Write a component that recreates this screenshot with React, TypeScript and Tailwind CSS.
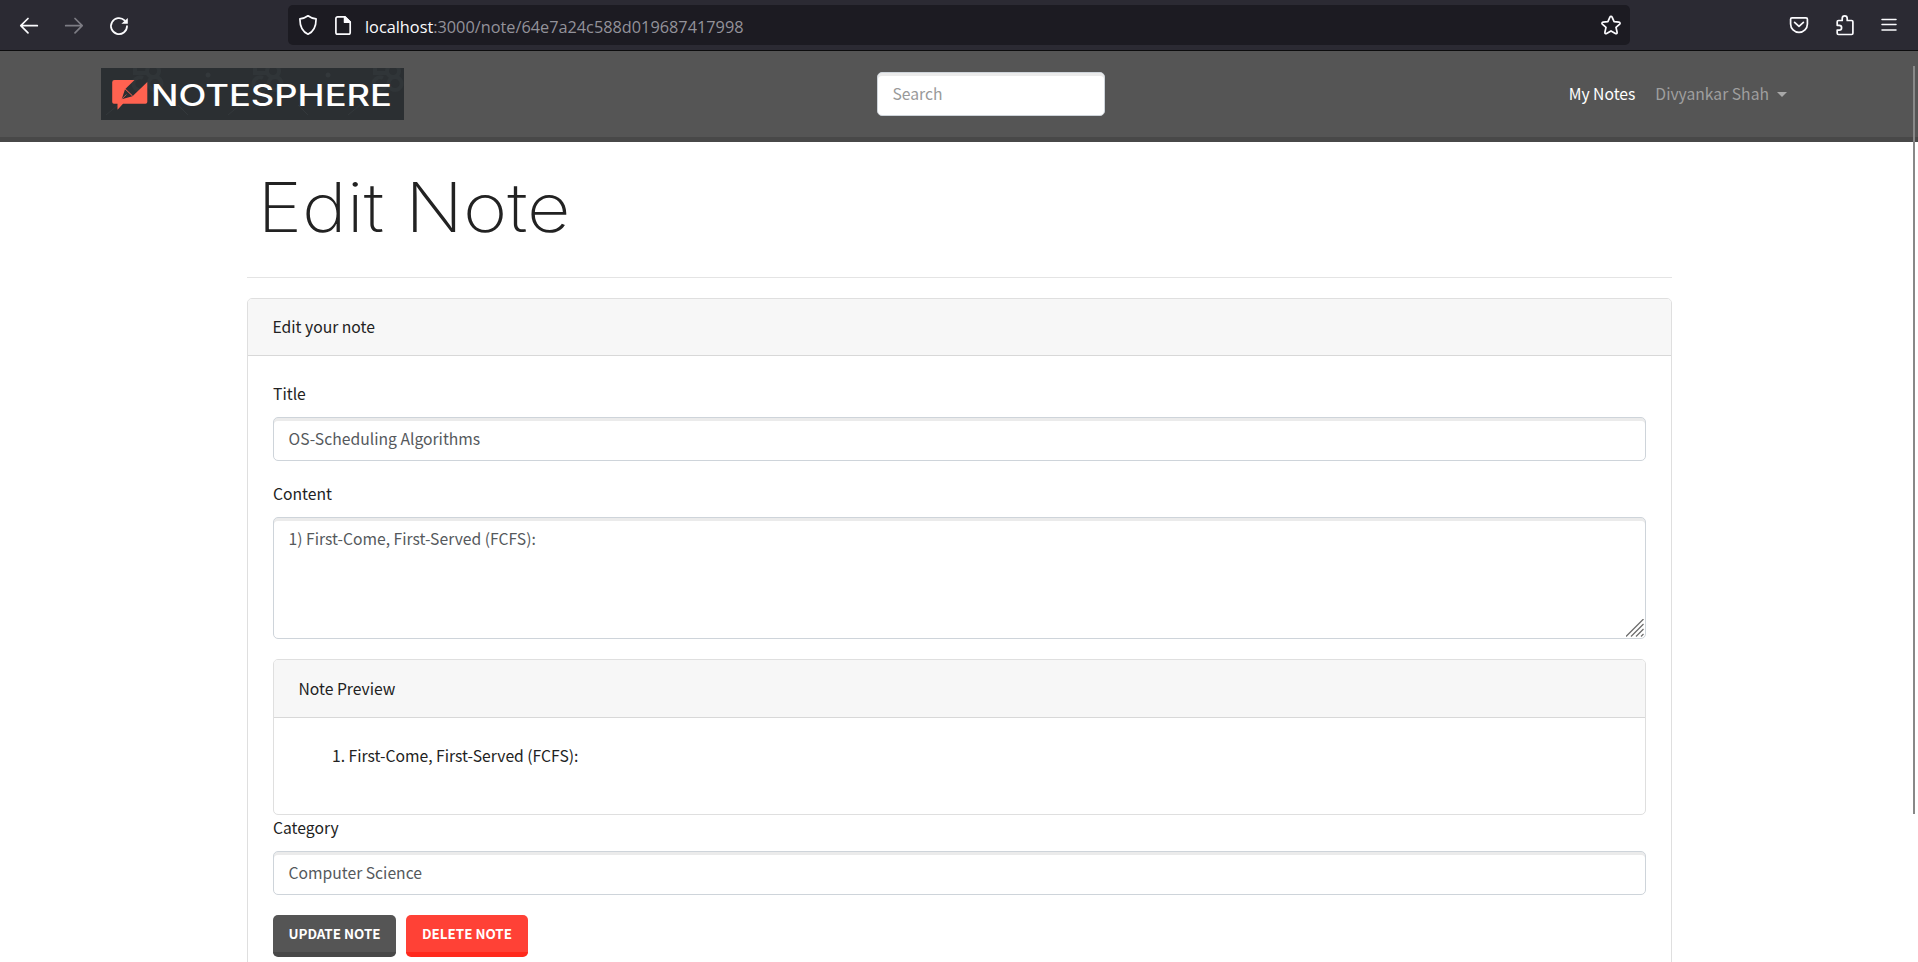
import type { ReactNode } from "react";

function Field({ children }: { children: ReactNode }) {
  return (
    <div className="flex h-11 items-center rounded-[5px] border border-[#ced4da] bg-white px-[14.5px] text-[#55595c] shadow-[inset_0_3px_0_0_#ebebeb]">
      {children}
    </div>
  );
}

function Label({ children }: { children: ReactNode }) {
  return <div className="h-9 pt-px">{children}</div>;
}

function BrowserBar() {
  return (
    <div className="flex h-[51px] shrink-0 items-start border-b border-[#0c0c0d] bg-[#2b2a33] text-[#fbfbfe]">
      <div className="flex w-[288px] items-center pt-[13px] pl-[17px]">
        <svg width="24" height="24" viewBox="0 0 24 24" fill="none" stroke="currentColor" strokeWidth="1.7" strokeLinecap="round" strokeLinejoin="round">
          <path d="M20.3 12.7H4M11 5.5l-7.2 7.2L11 19.9" />
        </svg>
        <svg className="ml-[21px] text-[#7d7c84]" width="24" height="24" viewBox="0 0 24 24" fill="none" stroke="currentColor" strokeWidth="1.7" strokeLinecap="round" strokeLinejoin="round">
          <path d="M3.7 12.7H20M13 5.5l7.2 7.2-7.2 7.2" />
        </svg>
        <svg className="ml-[21px]" width="24" height="24" viewBox="0 0 24 24" fill="none" stroke="currentColor" strokeWidth="1.8" strokeLinecap="round">
          <path d="M17.6 7.4A8 8 0 1 0 20 13.2" />
          <path d="M20.8 5v5.8h-6.4z" fill="currentColor" stroke="none" />
        </svg>
      </div>
      <div className="mt-[5px] flex h-10 w-[1342px] items-center rounded-[5px] bg-[#1c1b22] pr-[7px] pl-2">
        <svg width="24" height="24" viewBox="0 0 24 24" fill="none" stroke="currentColor" strokeWidth="1.7" strokeLinejoin="round">
          <path d="M12 2.8c-2.4 1.8-5 2.7-8.1 3.1 0 6.6 1.5 12.2 8.1 15.3 6.6-3.1 8.1-8.7 8.1-15.3C17 5.5 14.4 4.6 12 2.8z" />
        </svg>
        <svg className="ml-[11px]" width="24" height="24" viewBox="0 0 24 24" fill="none" stroke="currentColor" strokeWidth="1.7" strokeLinejoin="round">
          <path d="M6.6 3.8h7.4l5.2 5.2v10.5a1.7 1.7 0 0 1-1.7 1.7H6.6a1.7 1.7 0 0 1-1.7-1.7v-14a1.7 1.7 0 0 1 1.7-1.7z" />
          <path d="M13.6 3.8v5.4h5.6z" fill="currentColor" />
        </svg>
        <div className="ml-[10px] pt-[3px] font-['Open_Sans',sans-serif] text-[16.3px] leading-6 whitespace-nowrap">
          localhost<span className="text-[#93929a]">:3000/note/64e7a24c588d019687417998</span>
        </div>
        <svg className="ml-auto" width="24" height="24" viewBox="0 0 24 24" fill="none" stroke="currentColor" strokeWidth="1.7" strokeLinejoin="round">
          <path d="M12 3.4c.5 0 .9.3 1.1.7l2 4.6 4.9.5c1.1.1 1.4 1.2.7 1.9l-3.7 3.3 1.1 4.9c.2 1-.8 1.7-1.7 1.2L12 17.9l-4.4 2.6c-.9.5-1.9-.2-1.7-1.2L7 14.4l-3.7-3.3c-.7-.7-.4-1.8.7-1.9l4.9-.5 2-4.6c.2-.4.6-.7 1.1-.7z" />
        </svg>
      </div>
      <div className="flex items-center pt-[13px] pl-[157px]">
        <svg width="24" height="24" viewBox="0 0 24 24" fill="none" stroke="currentColor" strokeWidth="1.7" strokeLinecap="round" strokeLinejoin="round">
          <path d="M5 4.9h14a1.4 1.4 0 0 1 1.4 1.4v4.7a8.4 8.4 0 0 1-16.8 0V6.3A1.4 1.4 0 0 1 5 4.9z" />
          <path d="M7.6 9.4l4.4 4 4.4-4" />
        </svg>
        <svg className="ml-[22px]" width="24" height="24" viewBox="0 0 24 24" fill="none" stroke="currentColor" strokeWidth="1.7" strokeLinejoin="round">
          <path d="M4.2 12.3V8.8a1.3 1.3 0 0 1 1.3-1.3h3.7V5.4a2.5 2.5 0 0 1 5 0v2.1h4.4a1.3 1.3 0 0 1 1.3 1.3v11.4a1.3 1.3 0 0 1-1.3 1.3H5.5a1.3 1.3 0 0 1-1.3-1.3v-3.1h2a2.4 2.4 0 0 0 0-4.8z" />
        </svg>
        <svg className="ml-[20px]" width="24" height="24" viewBox="0 0 24 24" fill="none" stroke="currentColor" strokeWidth="1.5" strokeLinecap="round">
          <path d="M5 6.5h14M5 11.5h14M5 17h14" />
        </svg>
      </div>
    </div>
  );
}

function Logo() {
  return (
    <svg width="303" height="52" viewBox="0 0 303 52" className="block bg-[#2b2f32]">
      <g fill="none" stroke="#303538" strokeWidth="4">
        <path d="M34 0v5h11M52 -3a6 6 0 1 0 .1 0M42 10a6.5 6.5 0 1 0 3 8M54 9a6.5 6.5 0 1 0 .1 0" />
        <path d="M154 0v5h11M172 -3a6 6 0 1 0 .1 0M162 10a6.5 6.5 0 1 0 3 8M174 9a6.5 6.5 0 1 0 .1 0" />
        <path d="M274 0v5h11M292 -3a6 6 0 1 0 .1 0M282 10a6.5 6.5 0 1 0 3 8M294 9a6.5 6.5 0 1 0 .1 0" />
      </g>
      <g fill="#33383b">
        <circle cx="107" cy="7" r="2.5" />
        <circle cx="227" cy="7" r="2.5" />
      </g>
      <path d="M5 47l12-10M77 37l10 10M127 47l12-10M197 37l10 10M247 47l12-10" stroke="#33383b" />
      <path d="M13.5 12H33.5L24 21.3 20.7 31.2 31.5 28.3 46.3 14V34a1.8 1.8 0 0 1-1.8 1.8H22L16.5 41.8V35.8H13a1.8 1.8 0 0 1-1.8-1.8V14.3A2.3 2.3 0 0 1 13.5 12z" fill="#ff6250" />
      <path d="M23.9 20.7l7.8 7.4" stroke="#ff6250" strokeWidth="1" />
      <path d="M20.9 31l4.5-4.5" stroke="#ff6250" strokeWidth=".7" />
      <text x="50" y="37.7" textLength="241" lengthAdjust="spacingAndGlyphs" fill="#fff" className="font-['Inter',sans-serif] text-[29.8px] font-medium">
        NOTESPHERE
      </text>
    </svg>
  );
}

function Navbar() {
  return (
    <nav className="flex h-[91px] shrink-0 items-center border-b-[5px] border-[#484848] bg-[#555] pr-[131px] pl-[101px]">
      <Logo />
      <div className="ml-[473px] w-[228px]">
        <Field>
          <span className="text-[#999]">Search</span>
        </Field>
      </div>
      <div className="ml-auto flex items-center">
        <span className="text-white">My Notes</span>
        <span className="ml-5 text-[#9f9f9f]">Divyankar Shah</span>
        <span className="ml-2 h-0 w-0 border-x-[5px] border-t-[5px] border-x-transparent border-t-[#a8a8a8]" />
      </div>
    </nav>
  );
}

export default function App() {
  return (
    <div className="relative flex h-[962px] w-[1918px] flex-col overflow-hidden bg-white font-['Noto_Sans_CJK_SC',sans-serif] text-[15.7px] leading-6 text-[#222]">
      <BrowserBar />
      <Navbar />
      <main className="ml-[247px] w-[1425px]">
        <h1 className="h-[135px] origin-left scale-x-[1.11] pt-[25px] pl-[9.5px] font-['Inter',sans-serif] text-[68px] leading-[80px] font-[150] whitespace-nowrap">
          Edit Note
        </h1>
        <hr className="border-t border-[#e4e4e4]" />
        <section className="mt-5 h-[760px] rounded-[5px] border border-[#dfdfdf]">
          <header className="flex h-[57px] items-center rounded-t-[4px] border-b border-[#d8d8d8] bg-[#f7f7f7] px-[24.5px] pb-px">
            Edit your note
          </header>
          <div className="px-[25px] pt-[25px]">
            <Label>Title</Label>
            <Field>OS-Scheduling Algorithms</Field>
            <div className="mt-5">
              <Label>Content</Label>
            </div>
            <div className="relative h-[122px] rounded-[5px] border border-[#ced4da] px-[14.5px] pt-[9px] text-[#55595c] shadow-[inset_0_3px_0_0_#ebebeb]">
              1) First-Come, First-Served (FCFS):
              <svg className="absolute right-[1px] bottom-[1px]" width="18" height="18" viewBox="0 0 18 18" stroke="#6e6e6e" strokeWidth="1.3">
                <path d="M0 17.5L17.5 0M5 17.5L17.5 5M10 17.5L17.5 10M15 17.5L17.5 15" />
              </svg>
            </div>
            <div className="mt-5 h-[156px] rounded-[5px] border border-[#dfdfdf]">
              <div className="flex h-[58px] items-center rounded-t-[4px] border-b border-[#d8d8d8] bg-[#f7f7f7] px-[24.5px]">
                Note Preview
              </div>
              <div className="pt-[26px] pl-[58px]">1. First-Come, First-Served (FCFS):</div>
            </div>
            <Label>Category</Label>
            <Field>Computer Science</Field>
            <div className="mt-5 flex gap-[10px] text-[13.4px] font-bold text-white">
              <div className="flex h-[42px] w-[123px] items-center justify-center rounded-[5px] border-b-[5px] border-[#484848] bg-[#555] pb-[2px]">
                UPDATE NOTE
              </div>
              <div className="flex h-[42px] w-[122px] items-center justify-center rounded-[5px] border-b-[5px] border-[#ff291c] bg-[#ff4136] pb-[2px]">
                DELETE NOTE
              </div>
            </div>
          </div>
        </section>
      </main>
      <div className="absolute top-[66px] left-[1913px] h-[748px] w-[2px] bg-[#888]" />
    </div>
  );
}
